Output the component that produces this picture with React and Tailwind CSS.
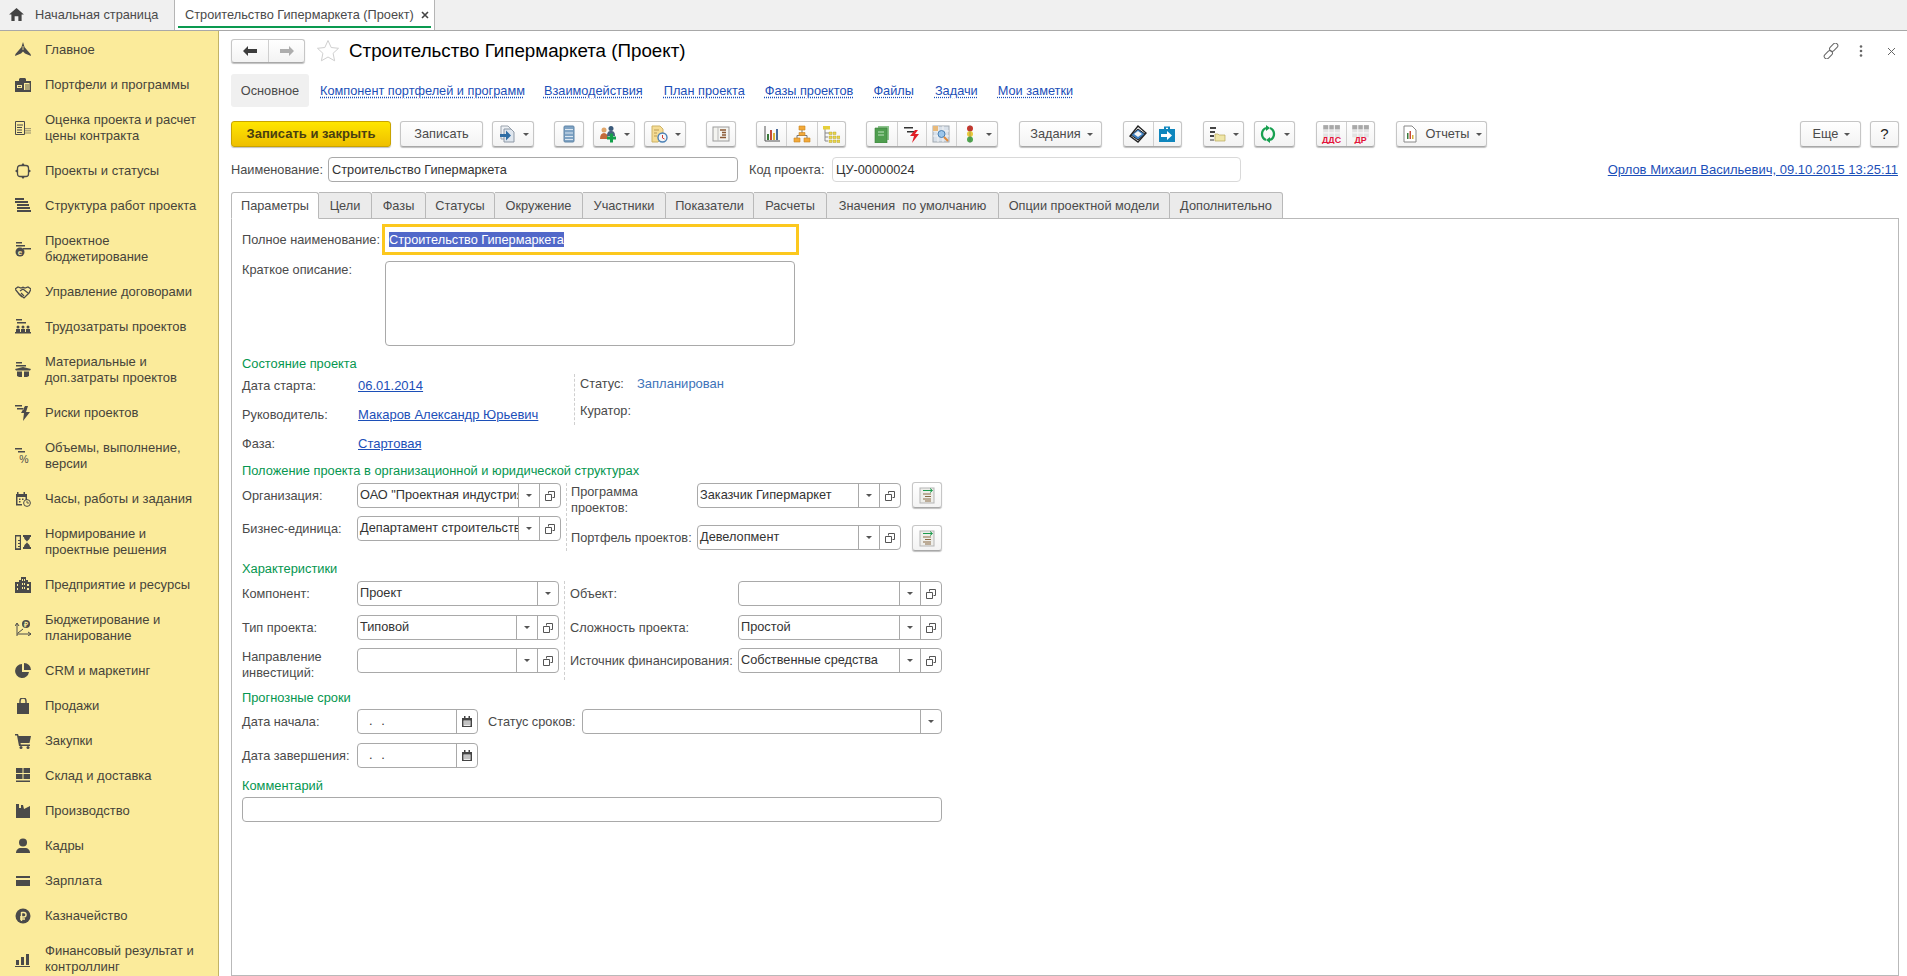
import React from "react";

const BG = "#fbeb9b";
const I = ({ children, cn = "w-4 h-4", fill = "#4a4a4a" }) => (
  <svg viewBox="0 0 16 16" className={cn + " shrink-0"} fill={fill}>{children}</svg>
);

const side = {
  main: <><path d="M8 0l1.600 5.200L15.500 12 16 14l-6-2.600L8 9.600 6 11.400 0 14l.5-2L6.400 5.200z"/><path d="M8 4v4" stroke={BG} strokeWidth=".8"/></>,
  port: <><path d="M0 4h4V2l1-1h5l1 1v2h5v11H0z"/><path d="M2 8h5v3H2zM9 6h5.500v7H9z" fill={BG}/><path d="M10 8h4M10 10h4M10 12h4M3 9.500h3" stroke="#4a4a4a" strokeWidth=".9"/></>,
  est: <g fill="none" stroke="#4a4a4a"><path d="M.5 1.500h9v13h-9z"/><path d="M2 5h6M2 7.500h5M2 10h5M2 12.500h5" /><path d="M11 8v6.500M13 8v6.500M15 8v6.500" strokeDasharray="1.200 1" /></g>,
  proj: <g><rect x="2.500" y="2.500" width="11" height="11" rx="2.500" fill="none" stroke="#4a4a4a" strokeWidth="1.300"/><path d="M8 0l2 2.500H6zM8 16l-2-2.500h4zM0 8l2.500-2v4zM16 8l-2.500 2V6z"/></g>,
  struct: <path d="M0 0h9v2H0zM0 3h13v2H0zM2 6h12v2H2zM2 9h13v2H2zM2 12h14v2H2z"/>,
  budget: <><path d="M1 1h6v1.500H1zM1 4h9v1.500H1zM8 7h8v1.500H8z"/><circle cx="5" cy="11" r="4.500"/><text x="5" y="14" fontSize="8" fontWeight="700" textAnchor="middle" fill={BG} fontFamily="Liberation Sans">е</text></>,
  deal: <g fill="none" stroke="#4a4a4a" strokeWidth="1.300"><path d="M0 5l3-2 3 1 2-.8 2 .8 3-1 3 2-2 4-5 5-5-4z"/><path d="M5 7l3-2 5 4M6 9l3 3M4 10l3 3" /></g>,
  labor: <><path d="M1 0h6v1.500H1zM2 3h9v1.500H2zM0 13h16v1.500H0z"/><circle cx="3" cy="8" r="1.500"/><circle cx="8" cy="8" r="1.500"/><circle cx="13" cy="8" r="1.500"/><path d="M1 13v-3h4v3zM6 13v-3h4v3zM11 13v-3h4v3z"/></>,
  mat: <><path d="M1 0h6v1.500H1zM1 3h10v1.500H1zM0 7l8-2 8 2-1 1.500H1zM2 9.500h5V15H4l-2-1zM9 9.500h5V14l-2 1H9z"/></>,
  risk: <><path d="M0 0h7v1.500H0zM2 3h7v1.500H2zM10 1L6 8h3l-1 8 7-9h-4l2-6z"/></>,
  vol: <><path d="M0 0h7v1.500H0zM3 3h7v1.500H3z"/><text x="9" y="14.500" fontSize="10.500" textAnchor="middle" fontFamily="Liberation Sans" fill="#4a4a4a">%</text></>,
  hours: <><path d="M1 3h1V1h1.500v2h5V1H10v2h2v6h-1.500V6h-8v7H7v1.500H1z"/><path d="M4 7.500h1.500V9H4zM7 7.500h1.500V9H7zM4 10h1.500v1.500H4z"/><circle cx="12" cy="12" r="3.400" fill="none" stroke="#4a4a4a"/><path d="M12 10v2h2" fill="none" stroke="#4a4a4a" strokeWidth=".9"/></>,
  norm: <><path d="M0 1h6v15H0zM1.200 2.500v11.800h3.600V13H3v-1h1.800v-2H3V9h1.800V7H3V6h1.800V2.500z" fillRule="evenodd"/><path d="M8 1h8v2h-1c0 3-3 3.500-3 5s3 2 3 5h1v2H8v-2h1c0-3 3-3.500 3-5S9 6 9 3H8z"/></>,
  ent: <><path d="M0 5h4V3h2V0h5v3h2v2h3v11H0z"/><path d="M2 7h1v2H2zM2 11h1v2H2zM7 2h1v2H7zM9 2h1v2H9zM7 6h1v2H7zM9 6h1v2H9zM7 10h1v2H7zM9 10h1v2H9zM12 7h2v2h-2zM12 11h2v2h-2z" fill={BG}/></>,
  plan: <><path d="M2 16V4M0 6l2-3 2 3M2 14h14M13 12l3 2-3 2M3 13l5-4" fill="none" stroke="#4a4a4a"/><circle cx="11" cy="4" r="4"/><text x="11" y="7" fontSize="7" fontWeight="700" textAnchor="middle" fill={BG} fontFamily="Liberation Sans">₽</text></>,
  crm: <><path d="M7 1a7 7 0 1 0 7 8H7z"/><path d="M9 0a7 7 0 0 1 7 7H9z"/></>,
  sale: <><path d="M2 5h12v11H2z"/><path d="M5 7V3a3 3 0 0 1 6 0v4" fill="none" stroke="#4a4a4a" strokeWidth="1.400"/><path d="M6 5h4V3a2 2 0 0 0-4 0z" fill={BG}/></>,
  buy: <><path d="M0 1h3l.7 2H16l-1.500 7H5.500L5.800 11.500H15v1.500H4L2 2.500H0z"/><circle cx="6" cy="14.500" r="1.500"/><circle cx="13" cy="14.500" r="1.500"/></>,
  ware: <path d="M1 0h6.500v5H1zM8.500 0H15v5H8.500zM1 6h6.500v5H1zM8.500 6H15v5H8.500zM1 12.500h14V14H1z"/>,
  prod: <path d="M1 1h3v4h2V2h2l1 4 6-3v12H1z"/>,
  hr: <><circle cx="8" cy="4.500" r="4"/><path d="M1 15c0-3 2-5 5-5h4c3 0 5 2 5 5z"/></>,
  pay: <><path d="M1 3h14v2H1zM1 7h14v6H1zM9 9.500h4v1H9z"/></>,
  treas: <><circle cx="8" cy="8" r="7.500"/><path d="M6.500 4v9M6.500 4.500h2.300a2.200 2.200 0 0 1 0 4.500H5M5 11h5" fill="none" stroke={BG} strokeWidth="1.400"/></>,
  fin: <path d="M1 9h3v5H1zM6 6h3v8H6zM11 3h3v11h-3zM0 15h15v1H0z"/>,
};

const items = [
  ["main", "Главное"], ["port", "Портфели и программы"], ["est", "Оценка проекта и расчет цены контракта", 1],
  ["proj", "Проекты и статусы"], ["struct", "Структура работ проекта"], ["budget", "Проектное бюджетирование", 1],
  ["deal", "Управление договорами"], ["labor", "Трудозатраты проектов"], ["mat", "Материальные и доп.затраты проектов", 1],
  ["risk", "Риски проектов"], ["vol", "Объемы, выполнение, версии", 1], ["hours", "Часы, работы и задания"],
  ["norm", "Нормирование и проектные решения", 1], ["ent", "Предприятие и ресурсы"], ["plan", "Бюджетирование и планирование", 1],
  ["crm", "CRM и маркетинг"], ["sale", "Продажи"], ["buy", "Закупки"], ["ware", "Склад и доставка"],
  ["prod", "Производство"], ["hr", "Кадры"], ["pay", "Зарплата"], ["treas", "Казначейство"],
  ["fin", "Финансовый результат и контроллинг", 1],
];

const Tri = () => <span className="w-0 h-0 border-x-[3px] border-t-[3px] border-x-transparent border-t-[#555] shrink-0" />;

const btn = "flex items-center justify-center h-[26px] rounded-[3px] border border-[#c6c6c6] border-b-[#a8a8a8] bg-gradient-to-b from-white to-[#f3f3f3] shadow-[0_1px_1px_rgba(0,0,0,0.25)] text-[#4a4a4a] shrink-0";

const Group = ({ cells, cn }) => (
  <div className={btn + " " + cn}>
    {cells.map(([w, c], i) => (
      <div key={i} className={"h-full flex items-center justify-center gap-[7px] " + w + (i ? " border-l border-[#cfcfcf]" : "")}>{c}</div>
    ))}
  </div>
);

const C = ({ children, cn = "w-[18px] h-[18px]" }) => <svg viewBox="0 0 18 18" className={cn + " shrink-0"}>{children}</svg>;

const tb = {
  copy: <C><path d="M3 1h7l3 3v10H3z" fill="#eef1f5" stroke="#9aa3ad"/><path d="M6 4h7l3 3v10H6z" fill="#dfe6ee" stroke="#8d98a5"/><path d="M2 9h6V5.500l5 5-5 5V12H2z" fill="#2e6da4"/></C>,
  list: <C><rect x="4" y="1" width="10" height="16" rx="1" fill="#7fa3c4" stroke="#5f84a6"/><path d="M5 4.500h8M5 8h8M5 11.500h8M5 14.500h8" stroke="#dbe7f1" strokeWidth="1.200"/></C>,
  users: <C><circle cx="5" cy="5" r="2.500" fill="#e0a66a"/><path d="M1 14c0-4 1.500-6 4-6s4 2 4 6z" fill="#c46a3a"/><circle cx="12" cy="3.500" r="2.500" fill="#3b5a7a"/><path d="M8 11c0-4 1.500-5 4-5s4 1 4 5z" fill="#48627e"/><path d="M10 10h3v3h3v3h-3v3h-3v-3H7v-3h3z" transform="translate(1 -1.500)" fill="#12a04a"/></C>,
  doc: <C><path d="M2 1h8l3 3v8l-5 5H2z" fill="#f5dc94" stroke="#cdb265"/><path d="M4 5h5M4 8h3M4 11h3" stroke="#b99c55"/><circle cx="12.500" cy="12.500" r="4.500" fill="#f4f6f9" stroke="#4b80b5" strokeWidth="1.400"/><path d="M12.500 10v3l2 1" stroke="#d04030" fill="none"/></C>,
  book: <C><rect x="1" y="2" width="16" height="14" fill="#f4f4f0" stroke="#9b9b9b"/><path d="M6 2v14" stroke="#bbb"/><path d="M8 5h6M10 7.500h4M10 10h4M8 12.500h6" stroke="#8a5a34" strokeWidth="1.300"/></C>,
  chart: <C><path d="M2 1v15h15" stroke="#555" fill="none"/><path d="M4 9h2v6H4z" fill="#3a7a3a"/><path d="M7 5h2v10H7z" fill="#c64a3a"/><path d="M10 8h2v7h-2z" fill="#d8b23a"/><path d="M13 4h2v11h-2z" fill="#4a6a9a"/></C>,
  org: <C><path d="M9 5v3M4 13v-2.500h10V13" stroke="#777" fill="none"/><path d="M6 1h6v4H6zM6 7.500h6v3H6zM1 13h6v4H1zM11 13h6v4h-6z" fill="#f2a93a" stroke="#c78320" strokeWidth=".6"/></C>,
  tree: <C><path d="M3 3v13h3M3 8h4M3 12h3" stroke="#888" fill="none"/><path d="M1 1h7v3.500H1z" fill="#e6cf3a"/><path d="M7 7h3v2.500H7zM11 7h3v2.500h-3zM7 11h3v2.500H7zM11 11h3v2.500h-3zM15 11h3v2.500h-3zM7 15h3v2.500H7zM11 15h3v2.500h-3zM15 15h3v2.500h-3z" fill="#ecd64a" stroke="#a89728" strokeWidth=".4"/></C>,
  green: <C><path d="M5 1h11v14H5z" fill="#8cc48c"/><path d="M2 3h12v15H2z" fill="#4f9e4f" stroke="#3b7d3b" strokeWidth=".6"/><path d="M5 7h6M5 10h6" stroke="#bfe3bf"/></C>,
  risk: <C><path d="M1 2h9v1.500H1zM4 6h7v1.500H4z" fill="#333"/><path d="M12 5L7 11h4L9 18l7-9h-4l3-4z" fill="#e01e26"/></C>,
  grid: <C><rect x="1" y="1" width="16" height="16" fill="#d9e1ea" stroke="#a0a8b0"/><path d="M1 6h16M1 11h16M6 1v16M11 1v16" stroke="#f4f4f4"/><path d="M1 1h5v5H1z" fill="#e8b97a"/><circle cx="9.500" cy="9" r="3.500" fill="#9cc6ea" stroke="#4a7fb0"/><path d="M12 12l4 4" stroke="#e28a3a" strokeWidth="2"/></C>,
  light: <C><circle cx="9" cy="3.500" r="3" fill="#c8362c"/><circle cx="9" cy="9" r="3" fill="#e8c83a"/><circle cx="9" cy="14.500" r="3" fill="#4fa84f"/><path d="M9 0v18" stroke="#555" strokeWidth=".4"/></C>,
  box: <C><path d="M9 1l8 7-8 9-8-6z" fill="#fff" stroke="#222" strokeWidth="1.400"/><path d="M2 10l7-6 7 5-7 6z" fill="#3d7fc0" stroke="#222"/><path d="M5 9l4-3 4 3-4 3z" fill="#f4f4f4"/></C>,
  case: <C><path d="M6 4V1.500h6V4h5v13H1V4z" fill="#0f86bd"/><path d="M8 2.800h2V4H8z" fill="#fff"/><path d="M3 9h6V6l5 4.500-5 4.500v-3H3z" fill="#fff"/></C>,
  folder: <C><path d="M2 2h6v2H2zM2 6h5v2H2zM2 10h4v2H2z" fill="#444"/><path d="M7 9h3l1 1h6v6H7z" fill="#efe6a8" stroke="#b9a65a" strokeWidth=".7"/><path d="M2 14h4v2H2z" fill="#999"/></C>,
  sync: <C><path d="M7 3A6.500 6.500 0 0 0 7 15M11 15A6.500 6.500 0 0 0 11 3" fill="none" stroke="#18a050" strokeWidth="2.300"/><path d="M7 0l4 3-4 3zM11 12l-4 3 4 3z" fill="#18a050"/></C>,
  dds: <C cn="w-[20px] h-[20px]"><path d="M2 1h15v4H2z" fill="#a8a8a8"/><path d="M2 5h15v7H2z" fill="#e2e2e2"/><path d="M2 8h15M7 1v11M12 1v11" stroke="#f7f7f7"/><text x="9.500" y="17.500" fontSize="8" fontWeight="700" textAnchor="middle" fill="#e3133a" fontFamily="Liberation Sans">ДДС</text></C>,
  dr: <C cn="w-[20px] h-[20px]"><path d="M2 1h15v4H2z" fill="#a8a8a8"/><path d="M2 5h15v7H2z" fill="#e2e2e2"/><path d="M2 8h15M7 1v11M12 1v11" stroke="#f7f7f7"/><text x="9.500" y="17.500" fontSize="8" fontWeight="700" textAnchor="middle" fill="#e3133a" fontFamily="Liberation Sans">ДР</text></C>,
  rep: <C><path d="M3 1h8l4 4v12H3z" fill="#fff" stroke="#888"/><path d="M6 8h1.500v6H6z" fill="#3a7a3a"/><path d="M8.500 6H10v8H8.500z" fill="#c64a3a"/><path d="M11 10h1.500v4H11z" fill="#d8b23a"/></C>,
  plus: <C><rect x="2" y="2" width="14" height="15" fill="#eeeeea" stroke="#b5b5b5"/><path d="M5 8h8M7 10.500h6M5 13h8M7 15h6" stroke="#8a6a44" strokeWidth="1.100"/><path d="M5 4.500h9M12 2.500l2.500 2-2.500 2" stroke="#1a9a4a" fill="none"/></C>,
};

const Label = ({ w, children, cn = "" }) => <div className={"shrink-0 leading-4 text-[#4a4a4a] " + w + " " + cn}>{children}</div>;
const H = ({ mt, children }) => <div className={"h-4 leading-4 text-[12.85px] text-[#05964f] " + mt}>{children}</div>;

const Copy = () => <svg viewBox="0 0 10 10" className="w-[10px] h-[10px]" fill="none" stroke="#555"><path d="M3.500 2.500V.5h6v6H7.500"/><path d="M.5 3.500h6v6h-6z"/></svg>;

const cell = "h-full flex items-center justify-center border-l border-[#a9a9a9] shrink-0 w-[21px]";
const Combo = ({ w, value, open = true, drop = true, date = false }) => (
  <div className={"flex h-[25px] rounded-[4px] border border-[#a9a9a9] bg-white overflow-hidden shrink-0 " + w}>
    <div className="flex-1 min-w-0 overflow-hidden whitespace-nowrap pl-[2px] leading-[22px] text-[#333]">{value}</div>
    {drop && <div className={cell}><Tri /></div>}
    {open && <div className={cell}><Copy /></div>}
    {date && (
      <div className={cell}>
        <svg viewBox="0 0 10 11" className="w-[10px] h-[11px]"><path d="M0 2h2V0h1.500v2h3V0H8v2h2v9H0z" fill="#444"/><path d="M1.500 4.500h7V10h-7z" fill="#eee"/><path d="M2.500 5.500h1v1h-1zM4.500 5.500h1v1h-1zM6.500 5.500h1v1h-1zM2.500 7.500h1v1h-1zM4.500 7.500h1v1h-1zM6.500 7.500h1v1h-1z" fill="#444"/></svg>
      </div>
    )}
  </div>
);

const Dots = () => <span className="pl-[5px] tracking-[0.5px]">&nbsp;.&nbsp;&nbsp;.</span>;

const link = "text-[13px] text-[#1c4fb8] underline";
const tabs = [
  ["Цели", "w-[53px]"], ["Фазы", "w-[54px]"], ["Статусы", "w-[69px]"], ["Окружение", "w-[88px]"], ["Участники", "w-[83px]"],
  ["Показатели", "w-[88px]"], ["Расчеты", "w-[73px]"], ["Значения\u00a0 по умолчанию", "w-[172px]"], ["Опции проектной модели", "w-[171px]"], ["Дополнительно", "w-[113px]"],
];
const navs = [
  ["Компонент портфелей и программ", "ml-[11px]"], ["Взаимодействия", "ml-[19px]"], ["План проекта", "ml-[21px]"], ["Фазы проектов", "ml-[20px]"],
  ["Файлы", "ml-[20px]"], ["Задачи", "ml-[21px]"], ["Мои заметки", "ml-[20px]"],
];

export default function App() {
  return (
    <div className="w-[1907px] h-[976px] flex flex-col overflow-hidden bg-white text-[12.75px] text-[#4a4a4a] font-['Liberation_Sans',Arial,sans-serif]">
      <div className="h-[31px] shrink-0 flex border-b border-[#a8a8a8] bg-[#f0f0f0]">
        <div className="w-[175px] flex items-center pl-[9px] pb-[1px] border-r border-[#b5b5b5]">
          <svg viewBox="0 0 16 14" className="w-[15px] h-[13px]" fill="#444"><path d="M8 0l8 7h-2.500v7H10V9H6v5H2.500V7H0z"/></svg>
          <span className="ml-[11px]">Начальная страница</span>
        </div>
        <div className="relative w-[260px] bg-white flex items-center pl-[10px] pb-[1px] border-r border-[#b5b5b5]">
          <span>Строительство Гипермаркета (Проект)</span>
          <svg viewBox="0 0 8 8" className="ml-[7px] w-2 h-2" stroke="#444" strokeWidth="1.600"><path d="M1 1l6 6M7 1L1 7"/></svg>
          <div className="absolute left-[3px] right-[3px] top-[26px] h-[2px] bg-[#0a9a50]" />
        </div>
      </div>

      <div className="flex-1 flex min-h-0">
        <div className="w-[219px] shrink-0 bg-[#fbeb9b] border-r border-[#c2b366] pt-px overflow-hidden text-[13px] text-[#46443a]">
          {items.map(([k, t, two]) => (
            <div key={k} className={"flex items-center pl-[15px] " + (two ? "h-[51px]" : "h-[35px]")}>
              <I>{side[k]}</I>
              <div className="ml-[14px] w-[160px] leading-4">{t}</div>
            </div>
          ))}
        </div>

        <div className="flex-1 min-w-0 flex flex-col pl-[12px] pr-[8px] pt-[8px]">
          <div className="h-6 shrink-0 flex items-center">
            <div className={btn + " !h-6 w-[74px]"}>
              <div className="w-[37px] h-full flex items-center justify-center">
                <svg viewBox="0 0 14 10" className="w-[14px] h-[10px]" fill="#3c3c3c"><path d="M0 5l5-5v3h9v4H5v3z"/></svg>
              </div>
              <div className="w-[36px] h-full flex items-center justify-center border-l border-[#cfcfcf]">
                <svg viewBox="0 0 14 10" className="w-[14px] h-[10px]" fill="#adadad"><path d="M14 5L9 0v3H0v4h9v3z"/></svg>
              </div>
            </div>
            <svg viewBox="0 0 24 24" className="ml-[11px] w-[24px] h-[24px]" fill="none" stroke="#cfcfcf"><path d="M12 1.500l3.200 7 7.300.8-5.400 5 1.500 7.500L12 18l-6.600 3.800 1.500-7.500-5.400-5 7.300-.8z"/></svg>
            <div className="ml-[9px] text-[18.75px] text-black leading-6">Строительство Гипермаркета (Проект)</div>
            <div className="ml-auto flex items-center pr-[1px]">
              <svg viewBox="0 0 16 16" className="w-[16px] h-[16px]" fill="none" stroke="#666"><rect x="8.200" y="-.5" width="5" height="9.500" rx="2.500" transform="rotate(45 10.700 4.250)"/><rect x="2.800" y="7" width="5" height="9.500" rx="2.500" transform="rotate(45 5.300 11.750)"/></svg>
              <svg viewBox="0 0 4 12" className="ml-[20px] w-1 h-3" fill="#666"><circle cx="2" cy="1.500" r="1.300"/><circle cx="2" cy="6" r="1.300"/><circle cx="2" cy="10.500" r="1.300"/></svg>
              <svg viewBox="0 0 9 9" className="ml-[24px] w-[9px] h-[9px]" stroke="#666"><path d="M1 1l7 7M8 1L1 8"/></svg>
              <div className="w-[2px]" />
            </div>
          </div>

          <div className="mt-[11px] h-[33px] shrink-0 flex items-center">
            <div className="w-[78px] h-full rounded-[3px] bg-[#f0f0f0] flex items-center justify-center">Основное</div>
            {navs.map(([t, m]) => (
              <span key={t} className={"text-[#1c4fb8] underline decoration-dotted underline-offset-2 " + m}>{t}</span>
            ))}
          </div>

          <div className="mt-[14px] h-[26px] shrink-0 flex">
            <div className="w-[160px] h-[26px] flex items-center justify-center rounded-[3px] border border-[#c9a400] bg-gradient-to-b from-[#ffe600] to-[#eebf00] shadow-[0_1px_1px_rgba(0,0,0,0.25)] font-bold text-[13px] text-[#4a3f10]">Записать и закрыть</div>
            <div className={btn + " w-[83px] ml-[9px]"}>Записать</div>
            <Group cn="w-[42px] ml-[9px]" cells={[["w-full", <>{tb.copy}<Tri /></>]]} />
            <Group cn="w-[30px] ml-[20px]" cells={[["w-full", tb.list]]} />
            <Group cn="w-[42px] ml-[9px]" cells={[["w-full", <>{tb.users}<Tri /></>]]} />
            <Group cn="w-[42px] ml-[9px]" cells={[["w-full", <>{tb.doc}<Tri /></>]]} />
            <Group cn="w-[30px] ml-[20px]" cells={[["w-full", tb.book]]} />
            <Group cn="w-[90px] ml-[20px]" cells={[["w-[30px]", tb.chart], ["w-[31px]", tb.org], ["w-[29px]", tb.tree]]} />
            <Group cn="w-[132px] ml-[20px]" cells={[["w-[30px]", tb.green], ["w-[30px]", tb.risk], ["w-[30px]", tb.grid], ["w-[42px]", <>{tb.light}<Tri /></>]]} />
            <div className={btn + " w-[83px] ml-[21px] gap-[6px] pl-[2px]"}>Задания<Tri /></div>
            <Group cn="w-[59px] ml-[21px]" cells={[["w-[30px]", tb.box], ["w-[29px]", tb.case]]} />
            <Group cn="w-[41px] ml-[21px]" cells={[["w-full", <>{tb.folder}<Tri /></>]]} />
            <Group cn="w-[41px] ml-[10px]" cells={[["w-full", <>{tb.sync}<Tri /></>]]} />
            <Group cn="w-[59px] ml-[21px]" cells={[["w-[30px]", tb.dds], ["w-[29px]", tb.dr]]} />
            <div className={btn + " w-[91px] ml-[21px] gap-[6px]"}>{tb.rep}Отчеты<Tri /></div>
            <div className={btn + " w-[61px] ml-auto gap-[6px] pl-[2px]"}>Еще<Tri /></div>
            <div className={btn + " w-[29px] ml-[9px] text-[15px] text-[#222]"}>?</div>
          </div>

          <div className="mt-[10px] h-[25px] shrink-0 flex items-center">
            <Label w="w-[97px]">Наименование:</Label>
            <div className="w-[410px] h-[25px] rounded-[4px] border border-[#a9a9a9] pl-[3px] leading-[23px] text-[#333]">Строительство Гипермаркета</div>
            <Label w="w-[83px]" cn="ml-[11px]">Код проекта:</Label>
            <div className="w-[409px] h-[25px] rounded-[4px] border border-[#d9d9d9] pl-[3px] leading-[23px] text-[#333]">ЦУ-00000024</div>
            <a className={link + " ml-auto pr-px"}>Орлов Михаил Васильевич, 09.10.2015 13:25:11</a>
          </div>

          <div className="mt-[10px] h-[27px] shrink-0 flex relative z-10 -mb-px">
            <div className="w-[88px] h-[27px] rounded-t-[3px] border border-[#b9b9b9] border-b-white bg-white flex items-center justify-center">Параметры</div>
            {tabs.map(([t, w]) => (
              <div key={t} className={"h-[27px] border-t border-r border-b border-[#b9b9b9] bg-[#ebebeb] rounded-tr-[3px] flex items-center justify-center whitespace-nowrap " + w}>{t}</div>
            ))}
          </div>

          <div className="flex-1 min-h-0 border border-[#b9b9b9] pl-[10px] pt-[5px] overflow-hidden">
            <div className="h-[31px] flex items-center">
              <Label w="w-[140px] whitespace-nowrap">Полное наименование:</Label>
              <div className="w-[417px] h-[31px] border-[3px] border-[#fcc81e] flex items-center pl-[4px]">
                <span className="bg-[#5168c9] text-white leading-[15px]">Строительство Гипермаркета</span>
              </div>
            </div>
            <div className="mt-[6px] h-[85px] flex">
              <Label w="w-[143px]" cn="pt-px">Краткое описание:</Label>
              <div className="w-[410px] h-[85px] rounded-[4px] border border-[#a9a9a9]" />
            </div>

            <H mt="mt-[10px]">Состояние проекта</H>
            <div className="flex h-[87px]">
              <div className="w-[332px] shrink-0 -mt-px">
                <div className="h-[29px] flex items-center"><Label w="w-[116px]">Дата старта:</Label><a className={link}>06.01.2014</a></div>
                <div className="h-[29px] flex items-center"><Label w="w-[116px]">Руководитель:</Label><a className={link}>Макаров Александр Юрьевич</a></div>
                <div className="h-[29px] flex items-center"><Label w="w-[116px]">Фаза:</Label><a className={link}>Стартовая</a></div>
              </div>
              <div className="mt-[2px] h-[51px] border-l border-dashed border-[#cfcfcf] pl-[5px]">
                <div className="h-5 flex items-center"><Label w="w-[57px]">Статус:</Label><span className="text-[13px] text-[#3d73b9]">Запланирован</span></div>
                <div className="mt-[7px] h-5 flex items-center"><Label w="w-[57px]">Куратор:</Label></div>
              </div>
            </div>

            <H mt="mt-[4px]">Положение проекта в организационной и юридической структурах</H>
            <div className="mt-[4px] flex h-[68px]">
              <div className="w-[324px] shrink-0">
                <div className="h-[25px] flex items-center"><Label w="w-[115px]">Организация:</Label><Combo w="w-[204px]" value={'ОАО "Проектная индустрия"'} /></div>
                <div className="mt-[8px] h-[25px] flex items-center"><Label w="w-[115px]">Бизнес-единица:</Label><Combo w="w-[204px]" value="Департамент строительства" /></div>
              </div>
              <div className="border-l border-dashed border-[#cfcfcf] pl-[4px]">
                <div className="h-[25px] flex items-start">
                  <Label w="w-[126px]" cn="pt-[1px]">Программа<br />проектов:</Label>
                  <Combo w="w-[204px]" value="Заказчик Гипермаркет" />
                  <div className={btn + " w-[30px] ml-[11px] -mt-px"}>{tb.plus}</div>
                </div>
                <div className="mt-[17px] h-[25px] flex items-center">
                  <Label w="w-[126px]">Портфель проектов:</Label>
                  <Combo w="w-[204px]" value="Девелопмент" />
                  <div className={btn + " w-[30px] ml-[11px]"}>{tb.plus}</div>
                </div>
              </div>
            </div>

            <H mt="mt-[10px]">Характеристики</H>
            <div className="mt-[4px] flex h-[99px]">
              <div className="w-[322px] shrink-0">
                <div className="h-[25px] flex items-center"><Label w="w-[115px]">Компонент:</Label><Combo w="w-[202px]" value="Проект" open={false} /></div>
                <div className="mt-[9px] h-[25px] flex items-center"><Label w="w-[115px]">Тип проекта:</Label><Combo w="w-[202px]" value="Типовой" /></div>
                <div className="mt-[8px] h-[25px] flex items-start"><Label w="w-[115px]" cn="pt-px">Направление<br />инвестиций:</Label><Combo w="w-[202px]" /></div>
              </div>
              <div className="border-l border-dashed border-[#cfcfcf] pl-[5px]">
                <div className="h-[25px] flex items-center"><Label w="w-[168px]">Объект:</Label><Combo w="w-[204px]" /></div>
                <div className="mt-[9px] h-[25px] flex items-center"><Label w="w-[168px]">Сложность проекта:</Label><Combo w="w-[204px]" value="Простой" /></div>
                <div className="mt-[8px] h-[25px] flex items-center"><Label w="w-[168px]">Источник финансирования:</Label><Combo w="w-[204px]" value="Собственные средства" /></div>
              </div>
            </div>

            <H mt="mt-[10px]">Прогнозные сроки</H>
            <div className="mt-[3px] h-[25px] flex items-center">
              <Label w="w-[115px]">Дата начала:</Label>
              <Combo w="w-[121px]" value={<Dots />} open={false} drop={false} date />
              <Label w="w-[94px]" cn="ml-[10px]">Статус сроков:</Label>
              <Combo w="w-[360px]" open={false} />
            </div>
            <div className="mt-[9px] h-[25px] flex items-center">
              <Label w="w-[115px]">Дата завершения:</Label>
              <Combo w="w-[121px]" value={<Dots />} open={false} drop={false} date />
            </div>
            <H mt="mt-[10px]">Комментарий</H>
            <div className="mt-[3px] w-[700px] h-[25px] rounded-[4px] border border-[#a9a9a9]" />
          </div>
        </div>
      </div>
    </div>
  );
}
